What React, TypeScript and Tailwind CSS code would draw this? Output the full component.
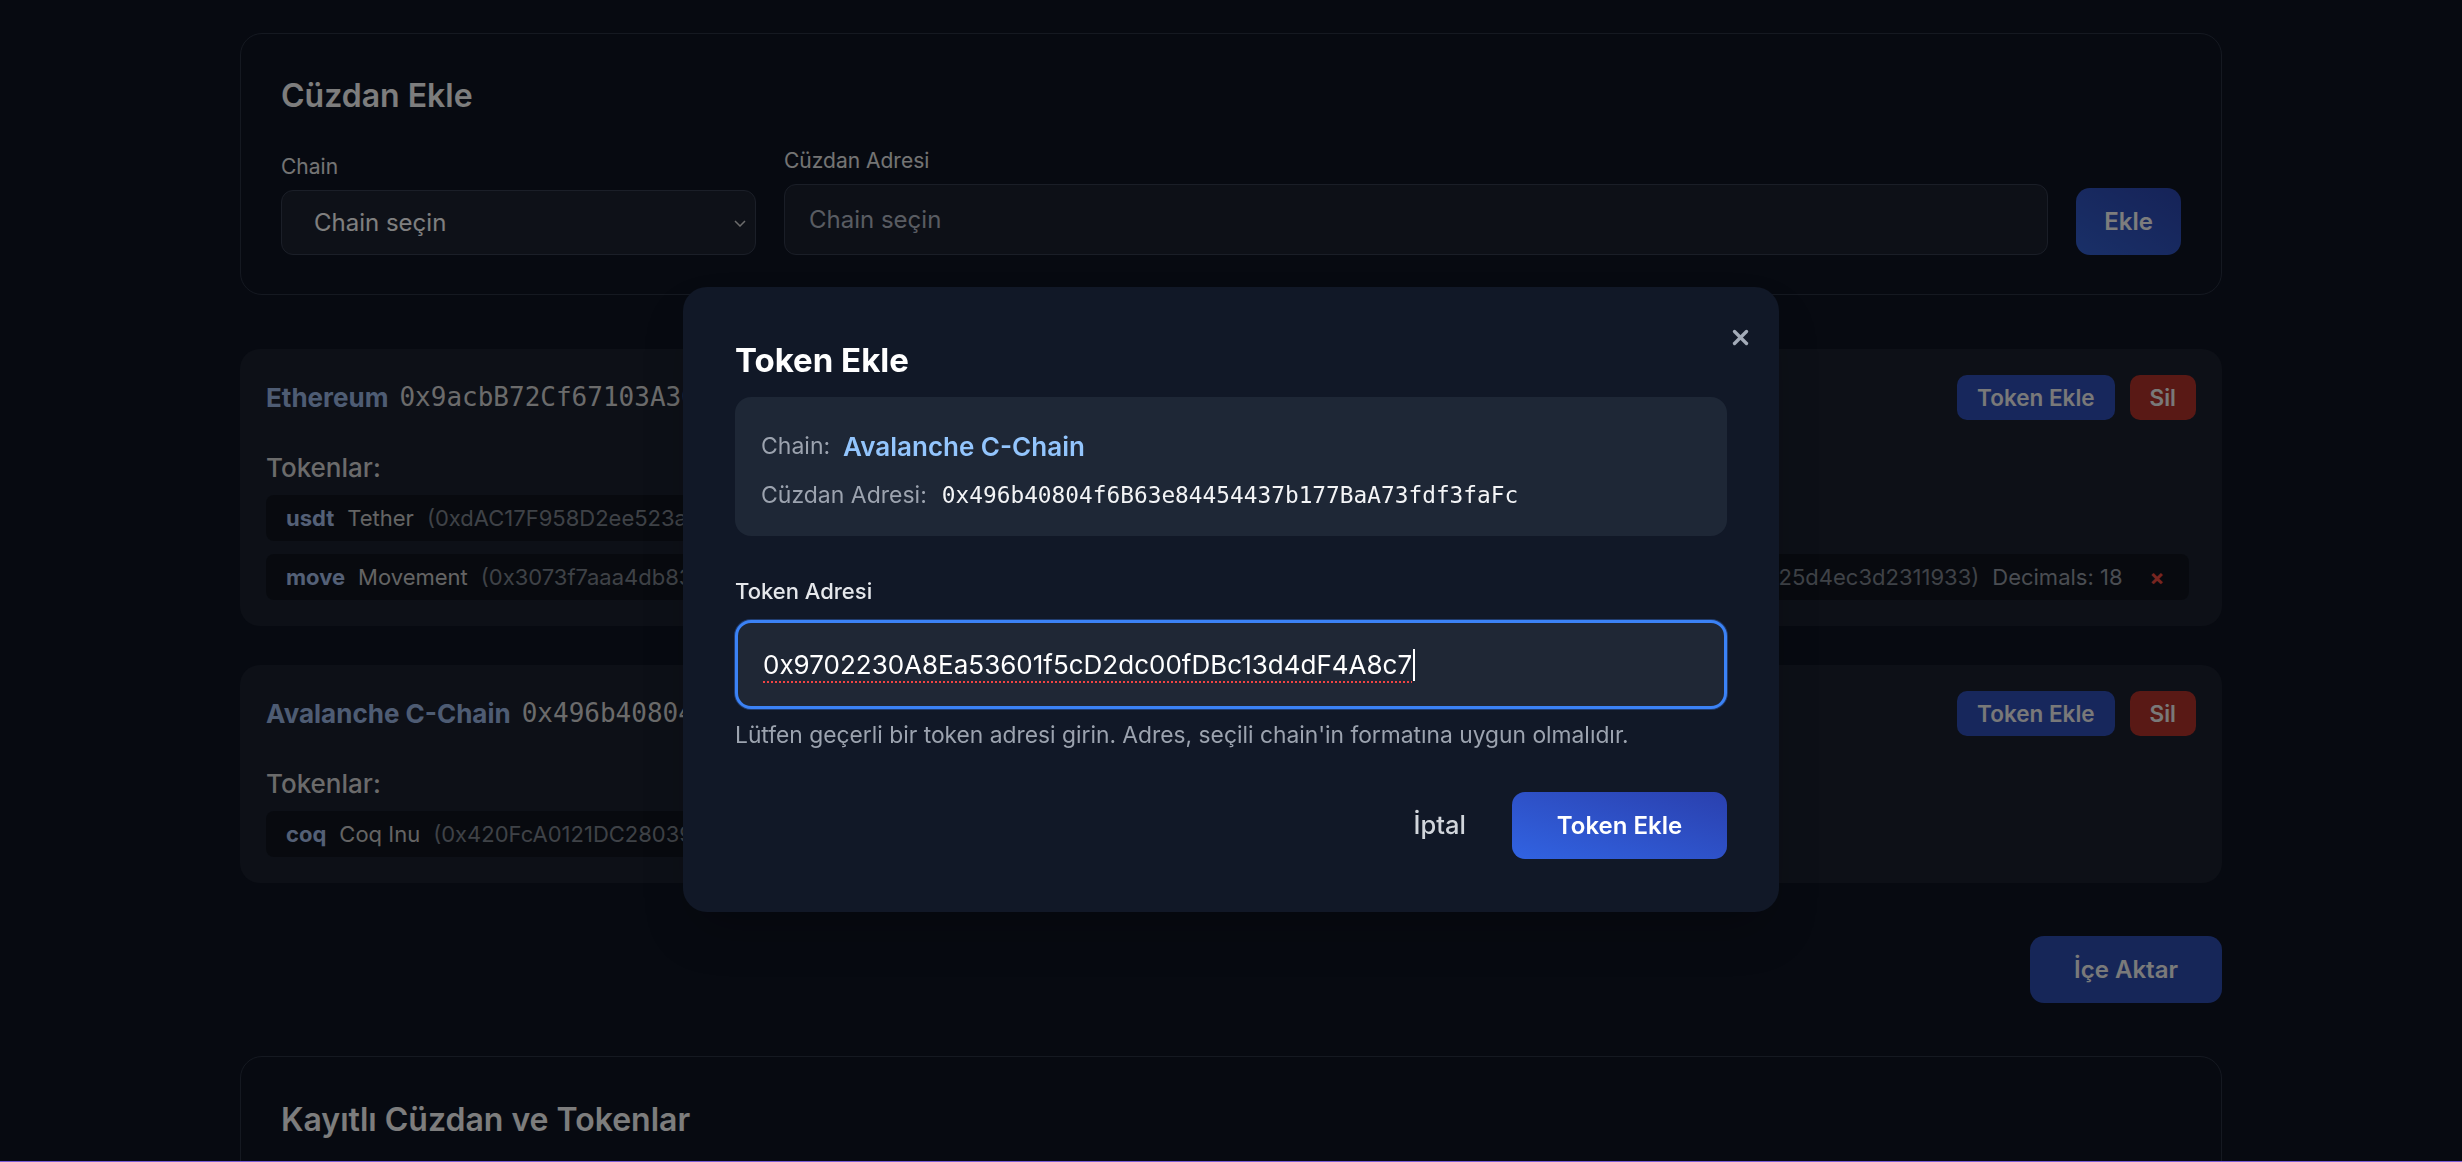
import { useState } from 'react';

type Token = { symbol: string; name: string; address: string; decimals: number };
type Wallet = { chain: string; address: string; tokens: Token[] };

const wallets: Wallet[] = [
  {
    chain: 'Ethereum',
    address: '0x9acbB72Cf67103A30b2f49a0c1B9e5d4CE7e2c1',
    tokens: [
      { symbol: 'usdt', name: 'Tether', address: '0xdAC17F958D2ee523a2206206994597C13D831ec7', decimals: 6 },
      {
        symbol: 'move',
        name: 'Movement',
        address:
          '0x3073f7aaa4db83f95e9fff17424f71d4751a3073a4c9e2b817f06d53ac29e84b1f7062dc95e3a18b04f7c26e9d1a35b08c4f6a25d4ec3d2311933',
        decimals: 18,
      },
    ],
  },
  {
    chain: 'Avalanche C-Chain',
    address: '0x496b40804f6B63e84454437b177BaA73fdf3faFc',
    tokens: [
      { symbol: 'coq', name: 'Coq Inu', address: '0x420FcA0121DC28039145009570975747295f2329', decimals: 18 },
    ],
  },
];

function WalletCard({ wallet }: { wallet: Wallet }) {
  return (
    <div className="rounded-[20px] bg-[#1a202e] p-[26px]">
      <div className="flex h-[45px] items-center justify-between">
        <div className="flex items-center gap-[11px] whitespace-nowrap">
          <span className="text-[26px] font-bold text-[#9db8e6]">{wallet.chain}</span>
          <span className="font-['DejaVu_Sans_Mono',monospace] text-[26px] text-[#d6d6d6]">{wallet.address}</span>
        </div>
        <div className="flex gap-[15px]">
          <button className="h-[45px] rounded-[10px] bg-[#2f4fb8] px-[20px] text-[22.5px] font-semibold text-[#f2f2f2]">
            Token Ekle
          </button>
          <button className="h-[45px] rounded-[10px] bg-[#b2322a] px-[20px] text-[22.5px] font-semibold text-[#f2f2f2]">
            Sil
          </button>
        </div>
      </div>
      <div className="mt-[30px] text-[26px] leading-[36px] font-medium text-[#d6d6d6]">Tokenlar:</div>
      <div className="mt-[9px] flex flex-col items-start gap-[13px]">
        {wallet.tokens.map((t) => (
          <div
            key={t.symbol}
            className="flex h-[46px] items-center gap-[13px] whitespace-nowrap rounded-[8px] bg-[#10151f] pl-[20px] pr-[25px] text-[22px]"
          >
            <span className="font-bold text-[#a8c0ec]">{t.symbol}</span>
            <span className="text-[#c8c8c8]">{t.name}</span>
            <span className="text-[#7e848e]">({t.address})</span>
            <span className="text-[#949aa4]">Decimals: {t.decimals}</span>
            <button className="ml-[14px] text-[22px] font-bold text-[#ef4b40]">×</button>
          </div>
        ))}
      </div>
    </div>
  );
}

export default function App() {
  const [tokenAddress] = useState('0x9702230A8Ea53601f5cD2dc00fDBc13d4dF4A8c7');

  return (
    <div className="min-h-screen bg-[#0e1422] font-['Inter',sans-serif]">
      <main className="mx-auto w-[1982px] pt-[33px] pb-[120px]">
        <section className="rounded-[22px] border border-[#2a3242] px-[40px] pt-[42px] pb-[39px]">
          <h2 className="text-[32px] leading-[40px] font-semibold text-[#fafafa]">Cüzdan Ekle</h2>
          <div className="mt-[31px] flex items-end gap-[28px]">
            <div className="w-[475px]">
              <label className="mb-[9px] block text-[21px] leading-[28px] text-[#e8e8e8]">Chain</label>
              <div className="relative">
                <select className="h-[65px] w-full appearance-none rounded-[12px] border border-[#363e50] bg-[#1c2230] pl-[32px] text-[24px] text-white outline-none">
                  <option>Chain seçin</option>
                </select>
                <svg
                  className="pointer-events-none absolute top-[30px] right-[10px]"
                  width="12"
                  height="7"
                  viewBox="0 0 12 7"
                  fill="none"
                  stroke="#d8d8d8"
                  strokeWidth="1.5"
                >
                  <polyline points="1,1 6,6 11,1" />
                </svg>
              </div>
            </div>
            <div className="flex-1">
              <label className="mb-[9px] block text-[21px] leading-[28px] text-[#e8e8e8]">Cüzdan Adresi</label>
              <input
                placeholder="Chain seçin"
                className="h-[71px] w-full rounded-[12px] border border-[#343c4e] bg-[#1a202e] px-[24px] text-[24px] text-white outline-none placeholder:text-[#b2b8c4]"
              />
            </div>
            <button className="h-[67px] rounded-[14px] bg-linear-to-tr from-[#3360d0] to-[#2c46b0] px-[28px] text-[24px] font-semibold text-[#fafafa]">
              Ekle
            </button>
          </div>
        </section>

        <div className="mt-[54px] flex flex-col gap-[39px]">
          {wallets.map((w) => (
            <WalletCard key={w.chain} wallet={w} />
          ))}
        </div>

        <div className="mt-[53px] flex justify-end">
          <button className="h-[67px] rounded-[14px] bg-[#2c4cb0] px-[44px] text-[24px] font-semibold text-[#f4f4f4]">
            İçe Aktar
          </button>
        </div>

        <section className="mt-[53px] min-h-[400px] rounded-[22px] border border-[#2a3242] px-[40px] pt-[43px]">
          <h2 className="text-[32px] leading-[40px] font-semibold text-[#fafafa]">Kayıtlı Cüzdan ve Tokenlar</h2>
        </section>
      </main>

      <div className="fixed inset-0 bg-black/50" />

      <div className="fixed inset-0 flex justify-center">
        <div className="relative mt-[287px] h-fit w-[1096px] rounded-[24px] bg-[#111827] px-[52px] pt-[53px] pb-[53px] shadow-2xl">
          <button className="absolute top-[41px] right-[29px] p-[1px]" aria-label="Kapat">
            <svg width="17" height="17" viewBox="0 0 17 17" stroke="#a3abb8" strokeWidth="3.4" strokeLinecap="round">
              <line x1="2.5" y1="2.5" x2="14.5" y2="14.5" />
              <line x1="14.5" y1="2.5" x2="2.5" y2="14.5" />
            </svg>
          </button>

          <h3 className="text-[33px] leading-[40px] font-bold text-white">Token Ekle</h3>

          <div className="mt-[17px] flex flex-col gap-[15px] rounded-[16px] bg-[#1e2736] px-[26px] pt-[31px] pb-[25px]">
            <div className="flex h-[36px] items-center gap-[13px]">
              <span className="text-[23px] text-[#9ca3af]">Chain:</span>
              <span className="text-[26px] font-semibold text-[#93c5fd]">Avalanche C-Chain</span>
            </div>
            <div className="flex h-[32px] items-center gap-[15px]">
              <span className="text-[23px] text-[#9ca3af]">Cüzdan Adresi:</span>
              <span className="font-['DejaVu_Sans_Mono',monospace] text-[22.8px] text-[#f3f4f6]">
                0x496b40804f6B63e84454437b177BaA73fdf3faFc
              </span>
            </div>
          </div>

          <label className="mt-[39px] block text-[22px] leading-[32px] font-medium text-[#e5e7eb]">Token Adresi</label>
          <div className="mt-[13px] flex h-[89px] items-center rounded-[16px] border-[3px] border-[#3b82f6] bg-[#1f2735] px-[25px] shadow-[0_0_0_1px_rgba(59,130,246,0.35)]">
            <span className="text-[26px] text-white underline decoration-[#ef4444] decoration-dotted decoration-2 underline-offset-[7px]">
              {tokenAddress}
            </span>
            <span className="ml-[1px] h-[32px] w-[2px] bg-white" />
          </div>
          <p className="mt-[12px] text-[22.8px] leading-[28px] text-[#9ca3af]">
            Lütfen geçerli bir token adresi girin. Adres, seçili chain'in formatına uygun olmalıdır.
          </p>

          <div className="mt-[43px] flex items-center justify-end gap-[22px]">
            <button className="px-[24px] text-[25.5px] font-medium text-[#d1d5db]">İptal</button>
            <button className="h-[67px] w-[215px] rounded-[13px] bg-linear-to-tr from-[#3163e2] to-[#2a40ae] text-[24px] font-semibold text-white">
              Token Ekle
            </button>
          </div>
        </div>
      </div>

      <div className="fixed inset-x-0 bottom-0 h-px bg-[#7b5cd6]" />
    </div>
  );
}
